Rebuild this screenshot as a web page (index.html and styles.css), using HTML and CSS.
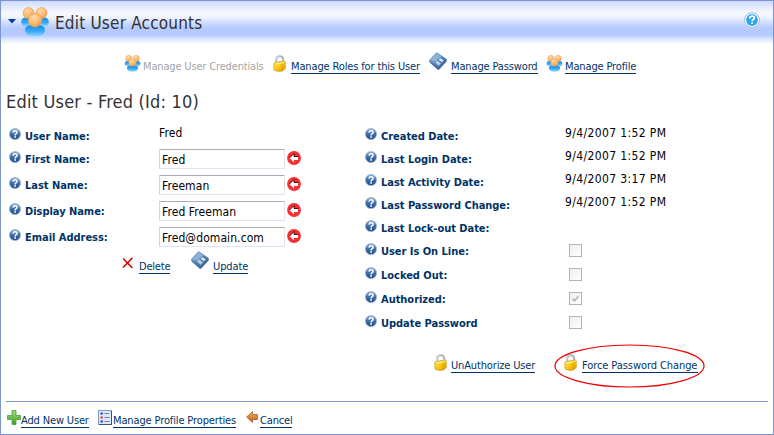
FILE: index.html
```html
<!DOCTYPE html>
<html lang="en">
<head>
<meta charset="utf-8">
<title>Edit User Accounts</title>
<link rel="stylesheet" href="styles.css">
</head>
<body>
<svg class="defs" width="0" height="0" aria-hidden="true">
  <defs>
    <radialGradient id="skin" cx=".4" cy=".3" r=".75"><stop offset="0" stop-color="#ffdca8"/><stop offset=".6" stop-color="#fdb970"/><stop offset="1" stop-color="#f09a50"/></radialGradient>
    <linearGradient id="shirt" x1="0" y1="0" x2="0" y2="1"><stop offset="0" stop-color="#1588ea"/><stop offset=".55" stop-color="#38a8f8"/><stop offset="1" stop-color="#8fdcff"/></linearGradient>
    <linearGradient id="gold" x1="0" y1="0" x2="1" y2="1"><stop offset="0" stop-color="#ffe85a"/><stop offset=".5" stop-color="#fbc913"/><stop offset="1" stop-color="#d99a00"/></linearGradient>
    <linearGradient id="steel" x1="0" y1="0" x2="1" y2="1"><stop offset="0" stop-color="#a5c3e2"/><stop offset=".5" stop-color="#5485b9"/><stop offset="1" stop-color="#2b5c94"/></linearGradient>
    <linearGradient id="ball" x1="0" y1="0" x2="0" y2="1"><stop offset="0" stop-color="#8fb0d6"/><stop offset=".5" stop-color="#3e6ea8"/><stop offset="1" stop-color="#1d4a86"/></linearGradient>
    <linearGradient id="leaf" x1="0" y1="0" x2="0" y2="1"><stop offset="0" stop-color="#a4dc78"/><stop offset="1" stop-color="#3a9c28"/></linearGradient>
    <linearGradient id="clay" x1="0" y1="0" x2="0" y2="1"><stop offset="0" stop-color="#f5b56a"/><stop offset="1" stop-color="#b85d10"/></linearGradient>
    <symbol id="users" viewBox="0 0 28 30">
      <ellipse cx="4.6" cy="15" rx="4.4" ry="4.6" fill="url(#shirt)"/>
      <ellipse cx="23.4" cy="15" rx="4.4" ry="4.6" fill="url(#shirt)"/>
      <path d="M4 23Q4 17.500 14 17.500T24 23Q23.500 29.500 14 29.500T4 23Z" fill="url(#shirt)"/>
      <circle cx="7.500" cy="6" r="5.500" fill="url(#skin)" stroke="#ee9a50" stroke-width=".6"/>
      <circle cx="20.500" cy="6" r="5.500" fill="url(#skin)" stroke="#ee9a50" stroke-width=".6"/>
      <circle cx="14" cy="13.200" r="6.700" fill="url(#skin)" stroke="#ee9a50" stroke-width=".7"/>
    </symbol>
    <symbol id="lock" viewBox="0 0 13 17">
      <path d="M3.200 8.500V4.500Q3.500 1.200 6.800 1.200T10.200 4.500V7" fill="none" stroke="#b0b4ba" stroke-width="2"/>
      <path d="M3 7.500V4.300Q3.500 1 6.500 .9" fill="none" stroke="#dfe2e5" stroke-width=".8"/>
      <path d="M.8 8.500Q1 7.500 2.200 7.400L11 6Q12.300 6 12.300 7V13.500L9.500 16Q5 17 1.800 15.600Q.8 15 .8 14Z" fill="url(#gold)" stroke="#c99406" stroke-width=".6"/>
      <path d="M2.200 9L8.500 8.200L11.500 6.800" fill="none" stroke="#fff8b8" stroke-width=".9"/>
      <path d="M9.300 8.400V15.600" stroke="#d79b00" stroke-width=".8"/>
    </symbol>
    <symbol id="disk" viewBox="0 0 18 18">
      <path d="M7.600 .5L17.500 7.200V9.200L10 17.500H8.800L.5 10V8.200Z" fill="url(#steel)" stroke="#5b82ae" stroke-width=".6"/>
      <path d="M7.700 1.300L12.200 4.400L6.600 9.800L2 8.300Z" fill="#8db2d8"/>
      <path d="M11.300 6.200L14.600 8.300L13 10.300L9.600 8Z" fill="#dce8f4"/>
      <path d="M6.200 10.400L8.500 8.600L12 11.200L9.600 13.800Z" fill="#b9cfe5"/>
      <path d="M8.600 8.200L12.600 10.900" stroke="#3d6c9f" stroke-width=".8"/>
      <path d="M1 9.700L9.400 17L17 9" fill="none" stroke="#2f5c8e" stroke-width=".9"/>
    </symbol>
    <symbol id="help" viewBox="0 0 12 12">
      <circle cx="6" cy="6" r="5.600" fill="url(#ball)" stroke="#9fb4cd" stroke-width=".7"/>
      <path d="M4 4.600Q4.200 2.800 6.100 2.800T8 4.400Q8 5.300 6.900 5.900Q6.100 6.400 6.100 7.400" fill="none" stroke="#fff" stroke-width="1.500"/>
      <rect x="5.300" y="8.200" width="1.600" height="1.600" fill="#fff"/>
    </symbol>
    <symbol id="required" viewBox="0 0 14 14">
      <circle cx="7" cy="7" r="6.900" fill="#f92e32"/>
      <path d="M2.500 7L7 2.500V5.500H11V9H7V11.500Z" fill="#fff"/>
      <path d="M2.500 7L7 2.500V5.500H11" fill="none" stroke="#000" stroke-width=".8"/>
    </symbol>
  </defs>
</svg>
<main class="panel">
  <header class="header">
    <svg class="caret" viewBox="0 0 8 5"><path d="M0 0H8L4 4.500Z" fill="#003a9c"/></svg>
    <svg class="header-users"><use href="#users"/></svg>
    <h1>Edit User Accounts</h1>
    <svg class="header-help" viewBox="0 0 16 16"><circle cx="8" cy="8" r="7.500" fill="#fff" stroke="#a9bdd8"/><circle cx="8" cy="8" r="5.900" fill="#2aa3f0"/><path d="M5.700 6.300Q6 4.200 8.200 4.200T10.400 6Q10.300 7.100 9 7.700Q8.200 8.200 8.100 9.200" fill="none" stroke="#fff" stroke-width="1.800"/><rect x="7.200" y="10.200" width="1.900" height="1.700" fill="#fff"/></svg>
  </header>

  <nav class="toolbar">
    <svg class="users"><use href="#users"/></svg><span class="link disabled w-cred">Manage User Credentials</span>
    <svg class="lock"><use href="#lock"/></svg><a class="link w-roles">Manage Roles for this User</a>
    <svg class="disk"><use href="#disk"/></svg><a class="link w-pass">Manage Password</a>
    <svg class="users"><use href="#users"/></svg><a class="link w-prof">Manage Profile</a>
  </nav>

  <h2>Edit User - Fred (Id: 10)</h2>

  <div class="columns">
    <section class="account">
      <div class="row first"><svg class="help"><use href="#help"/></svg><span class="label">User Name:</span><span class="value">Fred</span></div>
      <div class="row"><svg class="help"><use href="#help"/></svg><span class="label">First Name:</span><span class="field">Fred</span><svg class="required"><use href="#required"/></svg></div>
      <div class="row"><svg class="help"><use href="#help"/></svg><span class="label">Last Name:</span><span class="field">Freeman</span><svg class="required"><use href="#required"/></svg></div>
      <div class="row"><svg class="help"><use href="#help"/></svg><span class="label">Display Name:</span><span class="field">Fred Freeman</span><svg class="required"><use href="#required"/></svg></div>
      <div class="row"><svg class="help"><use href="#help"/></svg><span class="label">Email Address:</span><span class="field">Fred@domain.com</span><svg class="required"><use href="#required"/></svg></div>
      <div class="actions">
        <svg class="cross" viewBox="0 0 12 12"><path d="M1 1.500L10.500 11M10.500 .8L1 10.500" fill="none" stroke="#d40000" stroke-width="1.600"/></svg><a class="link w-delete">Delete</a>
        <svg class="disk"><use href="#disk"/></svg><a class="link w-update">Update</a>
      </div>
    </section>

    <section class="membership">
      <div class="row"><svg class="help"><use href="#help"/></svg><span class="label">Created Date:</span><span class="value">9/4/2007 1:52 PM</span></div>
      <div class="row"><svg class="help"><use href="#help"/></svg><span class="label">Last Login Date:</span><span class="value">9/4/2007 1:52 PM</span></div>
      <div class="row"><svg class="help"><use href="#help"/></svg><span class="label">Last Activity Date:</span><span class="value">9/4/2007 3:17 PM</span></div>
      <div class="row"><svg class="help"><use href="#help"/></svg><span class="label">Last Password Change:</span><span class="value">9/4/2007 1:52 PM</span></div>
      <div class="row"><svg class="help"><use href="#help"/></svg><span class="label">Last Lock-out Date:</span></div>
      <div class="row tall"><svg class="help"><use href="#help"/></svg><span class="label">User Is On Line:</span><span class="check"></span></div>
      <div class="row tall"><svg class="help"><use href="#help"/></svg><span class="label">Locked Out:</span><span class="check"></span></div>
      <div class="row tall"><svg class="help"><use href="#help"/></svg><span class="label">Authorized:</span><span class="check"><svg viewBox="0 0 11 11"><path d="M2.500 4.500V7L4.500 9L8.500 4.500V2L4.500 6.500Z" fill="#b5b5b5"/></svg></span></div>
      <div class="row tall"><svg class="help"><use href="#help"/></svg><span class="label">Update Password</span><span class="check"></span></div>
      <div class="commands">
        <svg class="lock"><use href="#lock"/></svg><a class="link w-unauth">UnAuthorize User</a>
        <span class="marked"><svg class="lock"><use href="#lock"/></svg><a class="link w-force">Force Password Change</a><svg class="ring" viewBox="0 0 151 44"><ellipse cx="75.500" cy="22" rx="74.500" ry="21" fill="none" stroke="#f00000" stroke-width="1.200"/></svg></span>
      </div>
    </section>
  </div>

  <footer class="footer">
    <svg class="plus" viewBox="0 0 14 15"><path d="M5 .5H9V5.500H13.500V9.500H9V14.500H5V9.500H.5V5.500H5Z" fill="url(#leaf)" stroke="#4c9c38" stroke-width=".8"/></svg><a class="link w-add">Add New User</a>
    <svg class="list" viewBox="0 0 14 15"><rect x=".5" y=".5" width="13" height="14" fill="#dce8f8" stroke="#7f9cc6"/><path d="M13.500 1V14.500H1" fill="none" stroke="#34547f"/><path d="M6.500 3.500H11.500M6.500 7.500H11.500M6.500 11.500H11.500" stroke="#7087ae"/><circle cx="3.700" cy="3.500" r="1.300" fill="#3848c8"/><circle cx="3.700" cy="7.500" r="1.300" fill="#e04030"/><circle cx="3.700" cy="11.500" r="1.300" fill="#3848c8"/></svg><a class="link w-props">Manage Profile Properties</a>
    <svg class="back" viewBox="0 0 12 12"><path d="M.6 6L6.500 .6V3.500H11.400V8.500H6.500V11.400Z" fill="url(#clay)" stroke="#a8602a" stroke-width=".8"/></svg><a class="link w-cancel">Cancel</a>
  </footer>
</main>
</body>
</html>
```

FILE: styles.css
```css
* { box-sizing: border-box; }
body { margin: 0; background: #fff; font-family: "DejaVu Sans Condensed", "DejaVu Sans", sans-serif; font-stretch: condensed; font-size: 11px; color: #000; }
svg { display: block; flex: none; }
.defs { position: absolute; }
.panel { width: 774px; height: 435px; border: 1px solid #7b96cf; overflow: hidden; display: flex; flex-direction: column; }
.header { height: 43px; flex: none; display: flex; align-items: flex-start; background: linear-gradient(#ccd9ff 0, #e4ebff 6px, #f7f9ff 12px, #f0f4ff 16px, #d5e0ff 21px, #b5caff 27px, #b5caff 34px, #dce6ff 38px, #fff 43px); }
.caret { width: 8px; height: 5px; margin: 18px 0 0 7px; }
.header-users { width: 28px; height: 30px; margin: 6px 0 0 5px; }
h1 { margin: 12px 0 0 6px; width: 160px; font-weight: normal; font-size: 17px; line-height: 20px; color: #333; white-space: nowrap; letter-spacing: .2px; }
.header-help { width: 16px; height: 16px; margin: 11px 13px 0 auto; }
.toolbar { height: 47px; flex: none; display: flex; align-items: flex-start; padding: 8px 0 0 123px; }
.link { display: block; flex: none; height: 14px; line-height: 14px; border-bottom: 1px solid #003366; color: #003366; white-space: nowrap; }
.toolbar .link { margin-top: 8px; }
.link.disabled { color: #a5a5a5; border-color: transparent; }
.users { width: 17px; height: 17px; margin-top: 3px; }
.lock { width: 13px; height: 17px; }
.disk { width: 18px; height: 18px; }
.toolbar .lock { margin-top: 3px; }
.w-cred { width: 121px; margin: 0 9px 0 2px; letter-spacing: -.16px; }
.w-roles { width: 129px; margin: 0 9px 0 5px; letter-spacing: -.14px; }
.w-pass { width: 87px; margin: 0 8px 0 4px; letter-spacing: -.14px; }
.w-prof { width: 71px; margin-left: 2px; letter-spacing: -.14px; }
h2 { flex: none; height: 34px; margin: 0 0 0 5px; line-height: 22px; font-weight: normal; font-size: 18px; color: #333; white-space: nowrap; letter-spacing: .2px; }
.columns { flex: 1; display: flex; }
.account { width: 356px; padding-left: 8px; }
.membership { flex: 1; padding-left: 8px; }
.row { display: flex; align-items: flex-start; height: 26px; }
.row.first { height: 22px; }
.row .help { width: 12px; height: 12px; margin-top: 3px; }
.label { width: 134px; margin: 5px 0 0 4px; line-height: 14px; font-weight: bold; color: #003366; white-space: nowrap; letter-spacing: -.03px; }
.value { margin-top: 1px; line-height: 14px; font-size: 12px; white-space: nowrap; letter-spacing: .37px; }
.account .value { letter-spacing: .1px; }
.field { width: 126px; height: 20px; border: 1px solid #dfe5f0; border-top-color: #abadb3; border-left-color: #d2d7e2; border-radius: 1px; padding-left: 2px; line-height: 20px; font-size: 12px; letter-spacing: .08px; margin-top: 2px; }
.required { width: 14px; height: 14px; margin: 4px 0 0 2px; }
.account .row:not(.first) .help { margin-top: 4px; }
.account .row:not(.first) .label { margin-top: 6px; }
.actions { display: flex; padding-left: 113px; }
.cross { width: 12px; height: 12px; margin-top: 6px; }
.actions .link { margin-top: 9px; }
.w-delete { width: 31px; margin: 0 21px 0 5px; letter-spacing: -.2px; }
.w-update { width: 35px; margin-left: 4px; letter-spacing: -.1px; }
.membership .row { height: 23px; }
.membership .row.tall { height: 24px; }
.membership .label { width: 184px; }
.check { width: 13px; height: 13px; border: 1px solid #b4b4b4; background: linear-gradient(135deg, #efefec, #fff); margin: 4px 0 0 4px; }
.commands { display: flex; padding: 18px 0 0 69px; }
.commands .link { margin-top: 5px; }
.w-unauth { width: 84px; margin: 0 29px 0 4px; letter-spacing: -.15px; }
.marked { display: flex; position: relative; }
.w-force { width: 116px; margin-left: 5px; letter-spacing: -.08px; }
.ring { position: absolute; left: -10px; top: -10px; width: 151px; height: 44px; }
.footer { flex: none; display: flex; height: 33px; margin: 0 5px; border-top: 1px solid #7b96cf; padding: 8px 0 0 1px; }
.plus { width: 14px; height: 15px; }
.footer .link { margin-top: 4px; }
.w-add { width: 68px; margin-right: 9px; letter-spacing: -.15px; }
.list { width: 14px; height: 15px; }
.w-props { width: 123px; margin: 0 10px 0 1px; letter-spacing: -.13px; }
.back { width: 12px; height: 12px; margin-top: 1px; }
.w-cancel { width: 32px; margin-left: 2px; letter-spacing: -.15px; }
```
